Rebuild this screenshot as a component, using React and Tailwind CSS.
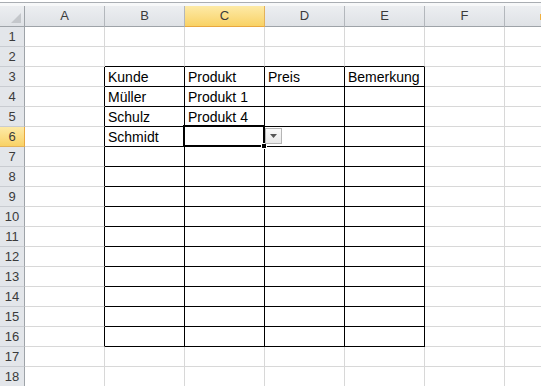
import React from "react";

const COLS = ["A", "B", "C", "D", "E", "F", "G"];
const DATA = {
  3: { B: "Kunde", C: "Produkt", D: "Preis", E: "Bemerkung" },
  4: { B: "Müller", C: "Produkt 1" },
  5: { B: "Schulz", C: "Produkt 4" },
  6: { B: "Schmidt" },
};
const TABLE_COLS = ["B", "C", "D", "E"];

function Cell({ row, col }) {
  const inTableRow = row >= 3 && row <= 16;
  const inTableCol = TABLE_COLS.includes(col);
  const blackRight = inTableRow && (inTableCol || col === "A");
  const blackBottom = inTableCol && row >= 2 && row <= 16;
  const text = DATA[row] && DATA[row][col];
  return (
    <div
      className={
        "w-[80px] shrink-0 border-r h-[20px] border-b flex items-end pl-[3px] pb-[1px] text-[14px] leading-[16px] text-black whitespace-nowrap " +
        (blackRight ? "border-r-black " : "border-r-[#d8d8d8] ") +
        (blackBottom ? "border-b-black" : "border-b-[#d8d8d8]")
      }
    >
      {text}
    </div>
  );
}

export default function App() {
  const rows = Array.from({ length: 18 }, (_, i) => i + 1);
  return (
    <div
      className="relative w-[541px] h-[386px] overflow-hidden bg-white"
      style={{ fontFamily: '"Liberation Sans", Arial, sans-serif' }}
    >
      <div className="w-[610px]">
        {/* top strip (formula bar edge) */}
        <div className="h-[6px] bg-white flex flex-col">
          <div className="h-[2px]" />
          <div className="h-[1px] bg-[#a9adb2]" />
          <div className="h-[3px] bg-[#f7f8f9]" />
        </div>

        {/* column headers */}
        <div className="flex h-[21px]">
          <div className="w-[25px] shrink-0 h-[21px] bg-gradient-to-b from-[#eceef1] to-[#dfe2e6] border-r border-b border-r-[#9ea3a8] border-b-[#9ea3a8] flex items-end justify-end">
            <svg width="12" height="12" className="mb-[2px] mr-[2px]">
              <polygon points="11,1 11,11 1,11" fill="#c4c7cb" />
            </svg>
          </div>
          {COLS.map((c) => {
            const sel = c === "C";
            return (
              <div
                key={c}
                className={
                  "w-[80px] shrink-0 border-r h-[21px] border-b flex items-center justify-center text-[13px] " +
                  (sel
                    ? "bg-gradient-to-b from-[#fdeaa6] to-[#f9d264] border-r-[#e3b25a] border-b-[#e8a73f] text-[#3b3b3b]"
                    : "bg-gradient-to-b from-[#eceef1] to-[#dfe2e6] border-r-[#b3b7bc] border-b-[#9ea3a8] text-[#3b3b3b]")
                }
              >
                {c === "G" ? "" : c}
              </div>
            );
          })}
        </div>

        {/* rows */}
        {rows.map((r) => {
          const sel = r === 6;
          return (
            <div key={r} className="flex h-[20px]">
              <div
                className={
                  "w-[25px] shrink-0 h-[20px] border-r border-b flex items-center justify-center text-[13px] text-[#3b3b3b] " +
                  (sel
                    ? "bg-gradient-to-b from-[#fdeaa6] to-[#f9d264] border-r-[#e8a73f] border-b-[#e3b25a]"
                    : "bg-[#e3e6ea] border-r-[#9ea3a8] border-b-[#c9ccd1]")
                }
              >
                {r}
              </div>
              {COLS.map((c) => (
                <Cell key={c} row={r} col={c} />
              ))}
            </div>
          );
        })}
      </div>

      {/* selection */}
      <div className="absolute left-[183px] top-[125px] w-[82px] h-[22px] border-2 border-black" />
      <div className="absolute left-[261px] top-[143px] w-[6px] h-[6px] bg-black border border-white" />

      {/* dropdown button */}
      <div className="absolute left-[265px] top-[128px] w-[17px] h-[16px] border border-[#b5b5b5] bg-gradient-to-b from-[#fafafa] to-[#e8e8e8] flex items-center justify-center">
        <svg width="7" height="4" viewBox="0 0 7 4">
          <polygon points="0,0 7,0 3.5,4" fill="#555" />
        </svg>
      </div>

      {/* tiny orange mark at right edge */}
      <div className="absolute left-[540px] top-[14px] w-[1px] h-[6px] bg-[#f0b040]" />
    </div>
  );
}
